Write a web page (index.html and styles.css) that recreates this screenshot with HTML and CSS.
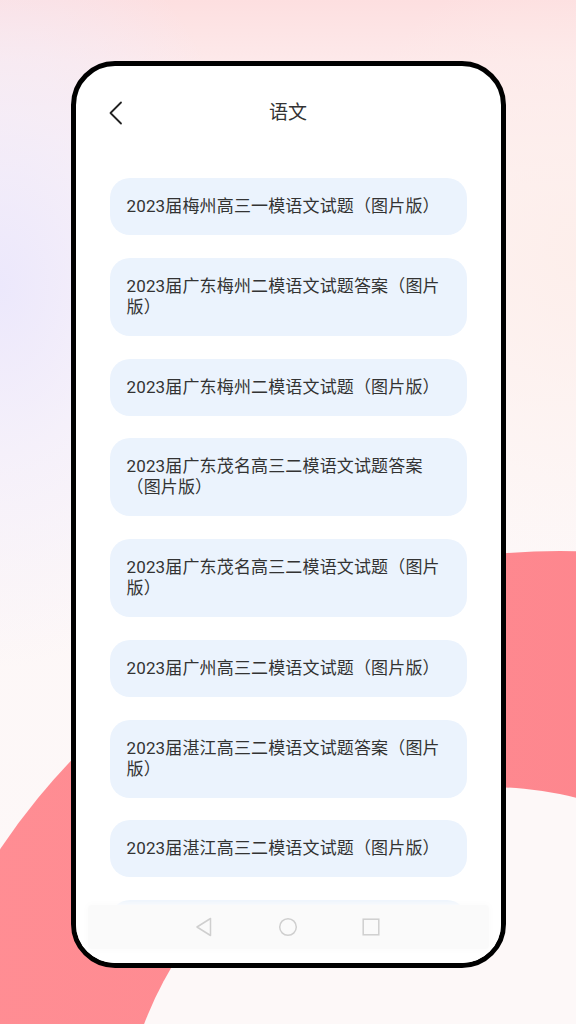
FILE: index.html
```html
<!DOCTYPE html>
<html lang="zh-CN">
<head>
<meta charset="utf-8">
<title>语文</title>
<link rel="stylesheet" href="styles.css">
</head>
<body>
<div class="bg">
  <div class="ring-outer"></div>
  <div class="ring-inner"></div>
</div>
<div class="page">
  <div class="phone">
    <div class="header">
      <div class="back">
        <svg width="14" height="24" viewBox="0 0 14 24"><path d="M12 1.5 L1.5 12 L12 22.5" fill="none" stroke="#222" stroke-width="1.8" stroke-linecap="round" stroke-linejoin="round"/></svg>
      </div>
      <div class="title">语文</div>
      <div></div>
    </div>
    <div class="list">
      <div class="card">2023届梅州高三一模语文试题（图片版）</div>
      <div class="card">2023届广东梅州二模语文试题答案（图片版）</div>
      <div class="card">2023届广东梅州二模语文试题（图片版）</div>
      <div class="card">2023届广东茂名高三二模语文试题答案（图片版）</div>
      <div class="card">2023届广东茂名高三二模语文试题（图片版）</div>
      <div class="card">2023届广州高三二模语文试题（图片版）</div>
      <div class="card">2023届湛江高三二模语文试题答案（图片版）</div>
      <div class="card">2023届湛江高三二模语文试题（图片版）</div>
      <div class="card card-empty"></div>
    </div>
    <div class="footer">
      <div class="navbar">
        <svg class="nav-icon" width="20" height="20" viewBox="0 0 20 20"><path d="M15.5 1.5 L15.5 18.5 L2 10 Z" fill="none" stroke="#cfcfcf" stroke-width="1.5" stroke-linejoin="round"/></svg>
        <svg class="nav-icon" width="20" height="20" viewBox="0 0 20 20"><circle cx="10" cy="10" r="8.3" fill="none" stroke="#cfcfcf" stroke-width="1.5"/></svg>
        <svg class="nav-icon" width="20" height="20" viewBox="0 0 20 20"><rect x="2.2" y="2.2" width="15.6" height="15.6" fill="none" stroke="#cfcfcf" stroke-width="1.5"/></svg>
      </div>
    </div>
  </div>
</div>
</body>
</html>
```

FILE: styles.css
```css
html, body {
  margin: 0;
  padding: 0;
}

body {
  width: 576px;
  height: 1024px;
  overflow: hidden;
  position: relative;
  font-family: "Roboto", "Noto Sans CJK SC", "Noto Sans", sans-serif;
  background:
    radial-gradient(ellipse 260px 380px at 0% 28%, rgba(236, 232, 252, 1) 0%, rgba(240, 236, 252, 0.6) 45%, rgba(250, 246, 252, 0) 100%),
    radial-gradient(ellipse 260px 300px at 100% 25%, rgba(253, 238, 234, 0.9) 0%, rgba(253, 244, 242, 0) 100%),
    linear-gradient(180deg, #fddfe0 0%, #fde9ea 6%, #fdf1f2 18%, #fdf7f7 40%, #fdf8f8 100%);
}

.bg {
  position: absolute;
  left: 0;
  top: 0;
  width: 576px;
  height: 1024px;
  overflow: hidden;
}

.ring-outer {
  position: absolute;
  left: -115px;
  top: 551px;
  width: 1350px;
  height: 1350px;
  border-radius: 50%;
  background: linear-gradient(90deg, #ff8e94 0%, #fe8990 40%, #fb7d86 100%);
}

.ring-inner {
  position: absolute;
  left: 120px;
  top: 787px;
  width: 736px;
  height: 736px;
  border-radius: 50%;
  background: #fdf8f8;
}

.page {
  position: relative;
  z-index: 1;
  padding-top: 61px;
}

.phone {
  width: 435px;
  height: 907px;
  box-sizing: border-box;
  margin: 0 auto;
  border: 5px solid #000;
  border-radius: 44px;
  background: #fff;
  overflow: hidden;
  display: flex;
  flex-direction: column;
}

.header {
  height: 94px;
  flex-shrink: 0;
  display: grid;
  grid-template-columns: 1fr auto 1fr;
  align-items: center;
}

.back {
  padding-left: 33px;
  display: flex;
  align-items: center;
}

.back svg {
  display: block;
}

.title {
  font-size: 19px;
  color: #333;
  line-height: 24px;
}

.list {
  flex: 1;
  min-height: 0;
  overflow: hidden;
  padding: 18px 34px 0;
  display: flex;
  flex-direction: column;
  gap: 22.75px;
}

.card {
  flex-shrink: 0;
  background: #ebf3fd;
  border-radius: 20px;
  padding: 18px 21px 18px 17px;
  font-size: 17px;
  letter-spacing: 0.15px;
  line-height: 21px;
  color: #333;
}

.card-empty {
  height: 21px;
}

.footer {
  height: 58px;
  flex-shrink: 0;
  background: #fff;
}

.navbar {
  height: 44px;
  margin: 0 12px;
  background: #fafafa;
  border-radius: 4px;
  box-shadow: 0 0 6px 2px #fcfcfc;
  display: flex;
  align-items: center;
  justify-content: center;
  gap: 63px;
}

.nav-icon {
  display: block;
}
```
